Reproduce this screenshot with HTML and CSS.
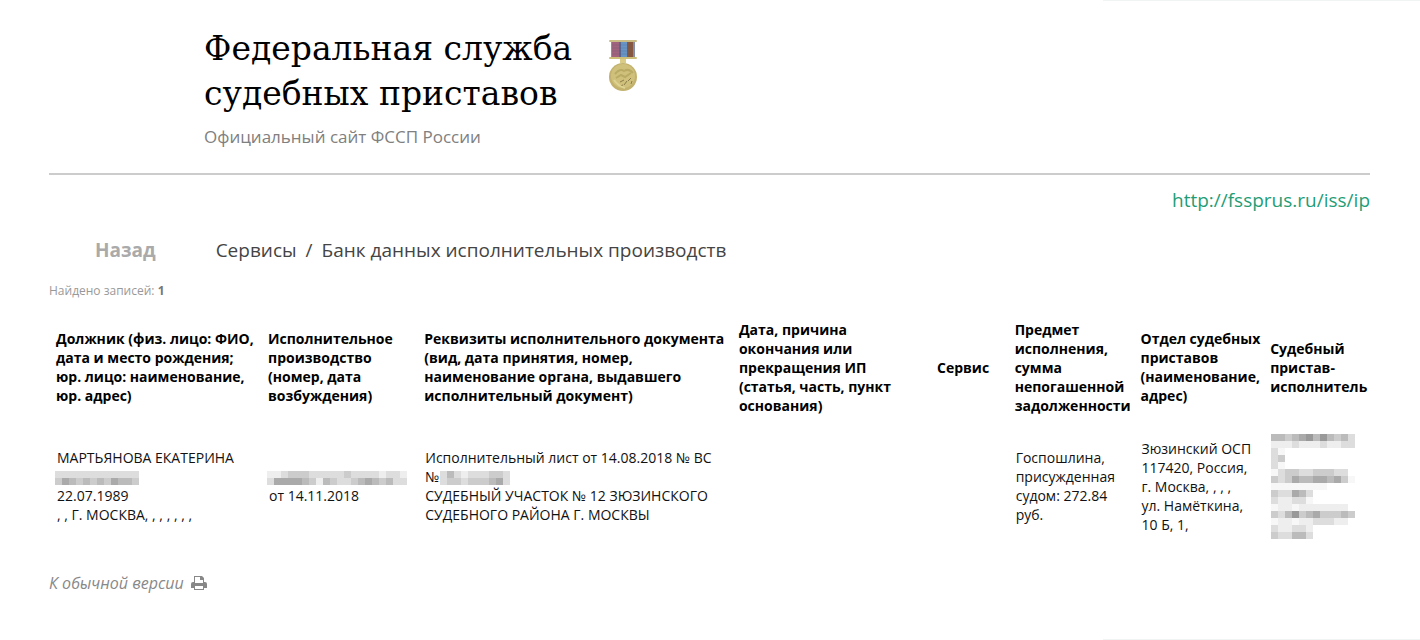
FILE: index.html
```
<!DOCTYPE html>
<html lang="ru">
<head>
    <meta charset="UTF-8">
    <meta name="viewport" content="width=device-width, initial-scale=1.0">
    <title>Федеральная служба судебных приставов</title>
    <link rel="stylesheet" href="styles.css">
</head>
<body>
    <div class="edge"></div>
    <div class="page">
        <header class="header">
            <div class="header-text">
                <h1 class="title">Федеральная служба<br>судебных приставов</h1>
                <p class="subtitle">Официальный сайт ФССП России</p>
            </div>
            <svg class="medal" viewBox="0 0 30 52" aria-hidden="true">
                <rect x="3" y="2" width="24" height="16" fill="#8390ac"/>
                <rect x="4" y="2" width="7" height="15" fill="#a0627c"/>
                <rect x="11" y="2" width="2" height="15" fill="#56688f"/>
                <rect x="13" y="2" width="6" height="15" fill="#6793c5"/>
                <rect x="19" y="2" width="6" height="15" fill="#87583f"/>
                <path d="M4 5h20M4 8h20M4 11h20M4 14h20" stroke="#4b587c" stroke-opacity=".2"/>
                <rect x="1" y="0" width="28" height="2" rx="1" fill="#c9bd85"/>
                <rect x="1" y="17" width="28" height="2" rx="1" fill="#cdbf78"/>
                <rect x="12" y="19" width="6" height="4" fill="#dacd88"/>
                <circle cx="15" cy="37" r="14" fill="#c2b26d"/>
                <circle cx="15" cy="36" r="12" fill="#cfc07b"/>
                <path d="M7 34q5-6 9-3 5-3 9 2M8 38l5-3 4 2 6-4" stroke="#b9aa64" stroke-width="2" fill="none"/>
                <path d="M12 42l4-2M16 45l3-4M20 41l3-3M23 44l1-3M12 46l3-1" stroke="#8b7d4a" fill="none"/>
                <path d="M6 40q4 6 11 8" stroke="#ded392" stroke-width="2" fill="none"/>
            </svg>
        </header>

        <div class="site-link"><a href="http://fssprus.ru/iss/ip">http://fssprus.ru/iss/ip</a></div>

        <nav class="nav">
            <a class="back" href="#">Назад</a>
            <div class="breadcrumbs"><a href="#">Сервисы</a><span class="slash">/</span><a href="#">Банк данных исполнительных производств</a></div>
        </nav>

        <p class="found">Найдено записей: <b>1</b></p>

        <table class="results">
            <thead>
                <tr>
                    <th class="col-debtor">Должник (физ. лицо: ФИО,<br>дата и место рождения;<br>юр. лицо: наименование,<br>юр. адрес)</th>
                    <th class="col-case">Исполнительное производство (номер, дата возбуждения)</th>
                    <th class="col-doc">Реквизиты исполнительного документа<br>(вид, дата принятия, номер,<br>наименование органа, выдавшего<br>исполнительный документ)</th>
                    <th class="col-end">Дата, причина<br>окончания или<br>прекращения ИП<br>(статья, часть, пункт<br>основания)</th>
                    <th class="col-service">Сервис</th>
                    <th class="col-subject">Предмет исполнения, сумма непогашенной задолженности</th>
                    <th class="col-office">Отдел судебных приставов (наименование, адрес)</th>
                    <th class="col-bailiff">Судебный пристав-исполнитель</th>
                </tr>
            </thead>
            <tbody>
                <tr>
                    <td>МАРТЬЯНОВА ЕКАТЕРИНА<br><svg class="mask mask-line" data-rows="dddddddddddd|cabcbcbcabbc"></svg><br>22.07.1989<br>, , Г. МОСКВА, , , , , , ,</td>
                    <td><svg class="mask mask-line" data-rows="eedcccdddddcddddedde|daaaabcebcddcbabcbdd"></svg><br>от 14.11.2018</td>
                    <td>Исполнительный лист от 14.08.2018 № ВС<br>№<svg class="mask" data-rows="dbdedddccd|dccdcccbad"></svg><br>СУДЕБНЫЙ УЧАСТОК № 12 ЗЮЗИНСКОГО<br>СУДЕБНОГО РАЙОНА Г. МОСКВЫ</td>
                    <td></td>
                    <td></td>
                    <td>Госпошлина, присужденная судом: 272.84 руб.</td>
                    <td>Зюзинский ОСП<br>117420, Россия,<br>г. Москва, , , ,<br>ул. Намёткина,<br>10 Б, 1,</td>
                    <td><svg class="mask mask-block" data-rows="bbcba9b9bcbd|eeedeeedeedd|df|dc|df|fdccddcccdd|cdcabbaabacf|ffffffff|cddabd|deeddf|feefeeeeeee|cdb9cbacccbc|feefeedddee|deedde|cddbbd"></svg></td>
                </tr>
            </tbody>
        </table>

        <a class="normal-version" href="#">К обычной версии
            <svg class="printer" viewBox="0 0 16 16" aria-hidden="true">
                <path fill="#888" fill-rule="evenodd" d="M3 1h8l2 2v4h1q2 0 2 2v4h-3v2H3v-2H0V9q0-2 2-2h1zM4 2v6h8V5h-3V2zM4 11v3h8v-3z"/>
            </svg>
        </a>
    </div>
    <div class="edge"></div>
    <script src="script.js"></script>
</body>
</html>
```
FILE: styles.css
```
body {
    display: flex;
    flex-direction: column;
    min-height: 100vh;
    margin: 0;
    background-color: #fff;
    color: #111;
    font-family: "Open Sans", "Noto Sans", sans-serif;
    font-size: 14px;
    line-height: 19px;
}
a {
    color: inherit;
    text-decoration: none;
}
.edge {
    width: 22.3%;
    height: 1px;
    margin-left: auto;
    background-color: #f0f4f3;
}
.page {
    flex: 1;
    padding: 25px 50px 24px 49px;
}
.header {
    display: flex;
    gap: 36px;
    padding: 0 0 24px 155px;
    border-bottom: 2px solid #ccc;
}
.title {
    margin: 0;
    color: #000;
    font-family: "Roboto Slab", "DejaVu Serif", serif;
    font-size: 33px;
    font-weight: 400;
    line-height: 45px;
}
.subtitle {
    margin: 9px 0 0;
    color: #808080;
    font-size: 17px;
    line-height: 24px;
}
.medal {
    width: 30px;
    height: 52px;
    margin-top: 14px;
}
.site-link {
    margin-top: 12px;
    color: #1f9d76;
    font-size: 19px;
    line-height: 26px;
    text-align: right;
}
.nav {
    display: flex;
    gap: 60px;
    margin-top: 24px;
    padding-left: 46px;
    font-size: 19px;
    line-height: 26px;
}
.back {
    color: #aaa;
    font-weight: 700;
}
.breadcrumbs {
    color: #444;
}
.slash {
    margin: 0 9px;
}
.found {
    margin: 18px 0;
    color: #999;
    font-size: 12px;
    line-height: 19px;
}
.found b {
    color: #777;
}
.results {
    width: 100%;
    table-layout: fixed;
    border-collapse: collapse;
}
.results th,
.results td {
    padding: 0 0 0 7px;
    text-align: left;
    vertical-align: middle;
}
.results th {
    height: 98px;
    color: #000;
    font-weight: 700;
}
.results td {
    height: 140px;
    padding-left: 8px;
}
.col-debtor { width: 16.2%; }
.col-case { width: 11.8%; }
.col-doc { width: 24.3%; }
.col-end { width: 15.1%; }
.col-service { width: 5.6%; }
.col-subject { width: 9.4%; }
.col-office { width: 9.7%; }
.col-bailiff { width: 7.9%; }
.mask {
    vertical-align: middle;
}
.mask-line {
    margin-left: -2px;
}
.mask-block {
    display: block;
}
.normal-version {
    display: inline-flex;
    align-items: center;
    gap: 7px;
    margin-top: 15px;
    color: #888;
    font-size: 16px;
    font-style: italic;
    line-height: 24px;
}
.printer {
    width: 16px;
    height: 16px;
}
```
FILE: script.js
```
// one hex digit per cell, 7px cells
document.querySelectorAll('.mask').forEach(function (svg) {
    var rows = svg.dataset.rows.split('|');
    var html = '';
    rows.forEach(function (row, y) {
        row.split('').forEach(function (c, x) {
            var fill = c === 'f' ? '#f7f7f7' : '#' + c + c + c;
            html += '<rect x="' + x * 7 + '" y="' + y * 7 + '" width="7" height="7" fill="' + fill + '"/>';
        });
    });
    svg.innerHTML = html;
    svg.setAttribute('width', rows[0].length * 7);
    svg.setAttribute('height', rows.length * 7);
});
```
